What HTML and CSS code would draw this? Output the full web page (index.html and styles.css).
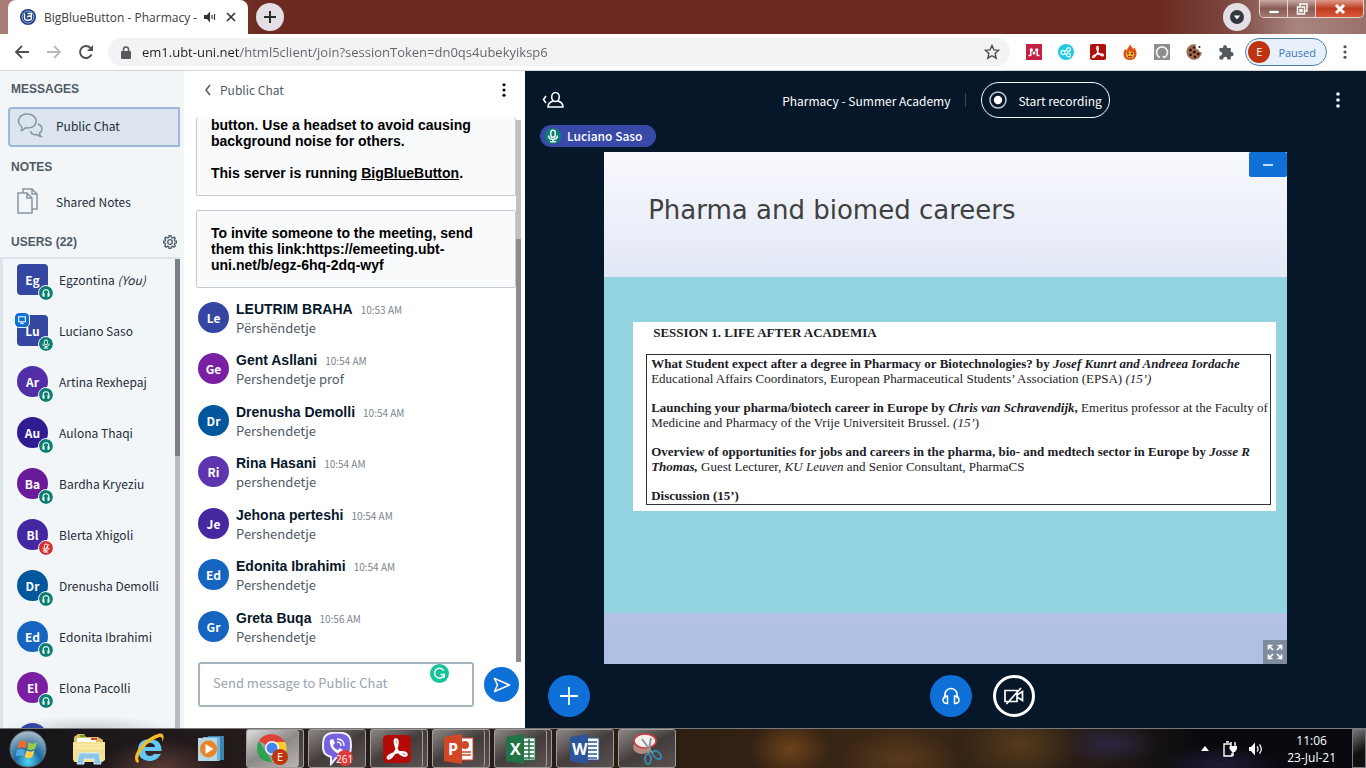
FILE: index.html
```html
<!DOCTYPE html>
<html lang="en">
<head>
    <meta charset="UTF-8">
    <meta name="viewport" content="width=device-width, initial-scale=1.0">
    <title>BigBlueButton - Pharmacy - Summer Academy</title>
    <link rel="stylesheet" href="styles.css">
</head>
<body>
    <svg class="sprite" aria-hidden="true">
        <symbol id="headset" viewBox="0 0 20 20">
            <path d="M4 12.500C3 5.500 6 2.500 10 2.500s7 3 6 10" fill="none" stroke="currentColor" stroke-width="1.600"/>
            <path d="M6.500 10v7.500C3.500 17.500 2 16 2 14s1.500-4 4.500-4zM13.500 10v7.500c3 0 4.500-1.500 4.500-3.500s-1.500-4-4.500-4z" fill="none" stroke="currentColor" stroke-width="1.500"/>
        </symbol>
        <symbol id="headset-small" viewBox="0 0 20 20">
            <path d="M4.500 12C3.500 6 6 3.500 10 3.500S16.500 6 15.500 12" fill="none" stroke="currentColor" stroke-width="2.400"/>
            <path d="M7 10v8c-3 0-4.500-1.500-4.500-4S4 10 7 10zM13 10v8c3 0 4.500-1.500 4.500-4S16 10 13 10z" fill="currentColor"/>
        </symbol>
        <symbol id="mic" viewBox="0 0 16 16">
            <rect x="5.500" y="1.500" width="5" height="8" rx="2.500" fill="none" stroke="currentColor" stroke-width="1.600"/>
            <path d="M3 7.500c0 6 10 6 10 0M8 12v2.500M4.500 14.500h7" fill="none" stroke="currentColor" stroke-width="1.600"/>
        </symbol>
        <symbol id="kebab" viewBox="0 0 4 16">
            <circle cx="2" cy="2" r="1.800"/><circle cx="2" cy="8" r="1.800"/><circle cx="2" cy="14" r="1.800"/>
        </symbol>
        <symbol id="acrobat" viewBox="0 0 16 16">
            <path d="M7 2.500c2-.5 1.500 3 .5 6C6.500 11 4 14 3 13.500 1.500 12.500 5 10.500 8 10s5.500 0 5.500 1.200c0 1.500-3.500.3-5-2C7 7 6.300 3 7 2.500z" fill="none" stroke="#fff" stroke-width="1.300"/>
        </symbol>
    </svg>

    <header class="tabstrip">
        <div class="tab">
            <svg class="favicon" viewBox="0 0 16 16"><circle cx="8" cy="8" r="8" fill="#1f3f82"/><circle cx="8" cy="8" r="6" fill="none" stroke="#8fa9da"/><path d="M4.500 4.500v4.500c0 3 7 3 7 0s-4-2-4-.5M7.500 4.500h4v3" fill="none" stroke="#fff" stroke-width="1.400"/></svg>
            <span class="tab-title">BigBlueButton - Pharmacy -</span>
            <svg class="sound" viewBox="0 0 12 12"><path d="M0 4h3l3-3.500v11L3 8H0z"/><path d="M8 4v4M10.500 3v6" stroke="#333" stroke-width="1.200"/></svg>
            <button class="plain" aria-label="Close tab"><svg width="10" height="10" viewBox="0 0 10 10"><path d="M1 1l8 8M9 1L1 9" stroke="#333" stroke-width="1.600"/></svg></button>
        </div>
        <button class="round-btn" aria-label="New tab"><svg width="14" height="14" viewBox="0 0 14 14"><path d="M7 1v12M1 7h12" stroke="#2b2b2b" stroke-width="2"/></svg></button>
        <button class="round-btn tab-search" aria-label="Search tabs"><svg width="14" height="14" viewBox="0 0 14 14"><circle cx="7" cy="7" r="7" fill="#333840"/><path d="M3.800 5.500h6.400L7 9.500z" fill="#fff"/></svg></button>
        <div class="window-controls">
            <button aria-label="Minimize"><svg width="12" height="12" viewBox="0 0 12 12"><path d="M1 7.500h10v3H1z" fill="#fff" stroke="#555" stroke-width=".5"/></svg></button>
            <button aria-label="Restore"><svg width="12" height="12" viewBox="0 0 12 12"><path d="M4 3V1h7v7H9" fill="none" stroke="#fff" stroke-width="1.500"/><path d="M1.500 4h7v7h-7zM4 6.500h2v2H4z" fill="none" stroke="#fff" stroke-width="1.500"/></svg></button>
            <button class="close" aria-label="Close"><svg width="12" height="12" viewBox="0 0 12 12"><path d="M2 2l8 8M10 2l-8 8" stroke="#fff" stroke-width="3"/></svg></button>
        </div>
    </header>

    <nav class="toolbar">
        <button class="plain" aria-label="Back"><svg width="16" height="16" viewBox="0 0 16 16"><path d="M15 8H2M8 2L2 8l6 6" fill="none" stroke="#4d5156" stroke-width="1.800"/></svg></button>
        <button class="plain" aria-label="Forward"><svg width="16" height="16" viewBox="0 0 16 16"><path d="M1 8h13M8 2l6 6-6 6" fill="none" stroke="#b7babd" stroke-width="1.800"/></svg></button>
        <button class="plain" aria-label="Reload"><svg width="16" height="16" viewBox="0 0 16 16"><path d="M13.500 10.500A6 6 0 1 1 12.500 4" fill="none" stroke="#4d5156" stroke-width="1.900"/><path d="M15 1v6H9z" fill="#4d5156"/></svg></button>
        <div class="address">
            <svg width="10" height="13" viewBox="0 0 10 13"><rect y="5" width="10" height="8" rx="1" fill="#55595e"/><path d="M2.500 6V3.500c0-3.300 5-3.300 5 0V6" fill="none" stroke="#55595e" stroke-width="1.500"/></svg>
            <input type="text" aria-label="Address" value="em1.ubt-uni.net/html5client/join?sessionToken=dn0qs4ubekyiksp6">
            <button class="plain" aria-label="Bookmark"><svg width="16" height="16" viewBox="0 0 16 16"><path d="M8 1.500l1.900 4.400 4.800.4-3.600 3.200 1.100 4.700L8 11.700l-4.200 2.500 1.100-4.700L1.300 6.300l4.800-.4z" fill="none" stroke="#4a4d51" stroke-width="1.400"/></svg></button>
        </div>
        <div class="extensions">
            <button class="plain" aria-label="Mendeley"><svg viewBox="0 0 16 16"><path d="M0 0h16v16H0z" fill="#c4213f"/><path d="M2.500 11.500h2c1 0-.5-3 .5-5M13.500 11.500h-2c-1 0 .5-3-.5-5" fill="none" stroke="#fff" stroke-width="1.500"/><circle cx="5.300" cy="6" r="1.700" fill="#fff"/><circle cx="10.700" cy="6" r="1.700" fill="#fff"/><circle cx="8" cy="9" r="1.500" fill="#fff"/></svg></button>
            <button class="plain" aria-label="Share"><svg viewBox="0 0 16 16"><circle cx="8" cy="8" r="8" fill="#1fc8e3"/><g fill="none" stroke="#e8fbff" stroke-width="1.300"><circle cx="5" cy="8.500" r="2"/><circle cx="10.500" cy="5.500" r="1.900"/><circle cx="10.500" cy="11" r="1.900"/><path d="M6.500 7.500l2-1.200M6.500 9.500l2 1"/></g></svg></button>
            <button class="plain" aria-label="Acrobat"><svg viewBox="0 0 16 16"><rect width="16" height="16" rx="2" fill="#b10e0e"/><use href="#acrobat"/></svg></button>
            <button class="plain" aria-label="Flame"><svg viewBox="0 0 16 16"><path d="M8 0c0 2 3 3 3 5l2-1.500c0 2 1.500 3 1.500 6C14.500 14 11.500 16 8 16s-6.500-2-6.500-6c0-2 .5-3 1.500-5l2 1.500C5 4 7.500 3 8 0z" fill="#df5319"/><path d="M4 9c1-2 7-2 8 0 1 7-9 7-8 0z" fill="#f9b233"/><circle cx="6" cy="9.500" r=".9" fill="#402010"/><circle cx="10" cy="9.500" r=".9" fill="#402010"/><path d="M6 12c1 1.300 3 1.300 4 0" fill="none" stroke="#402010"/></svg></button>
            <button class="plain" aria-label="Capture"><svg viewBox="0 0 16 16"><path d="M0 0h16v16H0z" fill="#8e8e8e"/><path d="M6 13.500A5.500 5.500 0 1 1 10 13.500L9 12" fill="none" stroke="#f3f3f3" stroke-width="1.700"/></svg></button>
            <button class="plain" aria-label="Cookies"><svg viewBox="0 0 16 16"><path d="M10 .5A7.700 7.700 0 1 0 15.800 8c-2 .7-3.300-.7-3-2.200C10.500 6 9 4 10 .5z" fill="#a06a50"/><g fill="#31150d"><circle cx="4.500" cy="6" r="1.500"/><circle cx="8" cy="3.500" r="1.200"/><circle cx="8.300" cy="8" r="1.600"/><circle cx="4.500" cy="10.800" r="1.400"/><circle cx="9" cy="12.800" r="1.400"/><circle cx="12.300" cy="10" r="1.400"/><circle cx="13.500" cy="3" r="1"/></g></svg></button>
            <button class="plain" aria-label="Extensions"><svg viewBox="0 0 16 16"><path d="M1.500 4h3.700C4.200.3 9.800.3 8.800 4h4v4.200c3.700-.8 3.700 4.800 0 4V15.500H9.300c.5-3.800-4.500-3.800-4 0H1.500v-3.800c3.600.4 3.600-4.600 0-4.200z" fill="#55585c"/></svg></button>
        </div>
        <button class="profile"><span>E</span>Paused</button>
        <button class="plain browser-menu" aria-label="Menu"><svg width="4" height="14"><use href="#kebab"/></svg></button>
    </nav>

    <main class="app">
        <aside class="sidebar">
            <h2>MESSAGES</h2>
            <button class="side-link active">
                <svg viewBox="0 0 26 26"><g fill="none" stroke="#8795a3" stroke-width="1.500"><path d="M4.500 18.500c.5-1.500.7-2.500.3-3.500C-2 9 3 2 10 2c12 0 12 14 1 14-1.500 0-2 0-2.500-.3-1.500 1.500-2.500 2.300-4 2.800z"/><path d="M21 12c5 2 5 7 1.500 9 0 1.500.5 2.500 1.500 3.500-2 0-3-1-4-2-3 .5-6-.5-6.500-3.500"/></g></svg>
                Public Chat
            </button>
            <h2>NOTES</h2>
            <button class="side-link">
                <svg viewBox="0 0 26 26"><g fill="none" stroke="#8795a3" stroke-width="1.500"><path d="M1 5h9l5 5v15H1zM10 5v5h5"/><path d="M6 5V1h9l5 5v15h-5M15 1v5h5"/></g></svg>
                Shared Notes
            </button>
            <div class="users-head">
                <h2>USERS (22)</h2>
                <button class="plain" aria-label="Manage users"><svg width="14" height="14" viewBox="0 0 14 14"><g fill="none" stroke="#4c5c69" stroke-width="1.300"><circle cx="7" cy="7" r="2.300"/><path d="M5.700 2.500L6 .7h2l.3 1.800 1.200.5 1.500-1L12.300 3.400l-1 1.500.5 1.100 1.600.2v1.800l-1.600.3-.5 1.100 1 1.500-1.400 1.300-1.400-.9-1.200.5-.3 1.600H6l-.3-1.600-1.200-.5-1.500.9-1.300-1.300 1-1.500L2.200 8.300.6 8V6.200L2.200 6l.5-1.100-1-1.500L3 2l1.500 1z"/></g></svg></button>
            </div>
            <div class="user-panel">
                <ul class="users">
                    <li><span class="avatar square indigo">Eg<i class="badge"><svg><use href="#headset-small"/></svg></i></span><span>Egzontina <em>(You)</em></span></li>
                    <li><span class="avatar square indigo">Lu<i class="presenter"><svg viewBox="0 0 12 12"><path d="M2 2h8v6H2zM4 10h4" fill="none" stroke="#fff" stroke-width="1.300"/></svg></i><i class="badge"><svg><use href="#mic"/></svg></i></span>Luciano Saso</li>
                    <li><span class="avatar violet">Ar<i class="badge"><svg><use href="#headset-small"/></svg></i></span>Artina Rexhepaj</li>
                    <li><span class="avatar navy">Au<i class="badge"><svg><use href="#headset-small"/></svg></i></span>Aulona Thaqi</li>
                    <li><span class="avatar plum">Ba<i class="badge"><svg><use href="#headset-small"/></svg></i></span>Bardha Kryeziu</li>
                    <li><span class="avatar grape">Bl<i class="badge muted"><svg viewBox="0 0 16 16"><use href="#mic"/><path d="M13 2L3 14" stroke="#fff" stroke-width="1.500"/></svg></i></span>Blerta Xhigoli</li>
                    <li><span class="avatar ocean">Dr<i class="badge"><svg><use href="#headset-small"/></svg></i></span>Drenusha Demolli</li>
                    <li><span class="avatar blue">Ed<i class="badge"><svg><use href="#headset-small"/></svg></i></span>Edonita Ibrahimi</li>
                    <li><span class="avatar purple">El<i class="badge"><svg><use href="#headset-small"/></svg></i></span>Elona Pacolli</li>
                    <li><span class="avatar indigo"></span></li>
                </ul>
                <div class="scrollbar"><div class="thumb"></div></div>
            </div>
        </aside>

        <section class="chat">
            <header class="chat-head">
                <button class="plain"><svg width="6" height="12" viewBox="0 0 6 12"><path d="M5 1L1 6l4 5" fill="none" stroke="#4e5a66" stroke-width="1.500"/></svg>Public Chat</button>
                <button class="plain" aria-label="Chat options"><svg width="4" height="14"><use href="#kebab"/></svg></button>
            </header>
            <div class="chat-body">
                <div class="messages">
                    <div class="notice first">button. Use a headset to avoid causing background noise for others.<br><br>This server is running <a href="#">BigBlueButton</a>.</div>
                    <div class="notice">To invite someone to the meeting, send them this link:https://emeeting.ubt-uni.net/b/egz-6hq-2dq-wyf</div>
                    <ul class="posts">
                        <li><span class="avatar indigo">Le</span><div><b>LEUTRIM BRAHA</b><time>10:53 AM</time><p>Përshëndetje</p></div></li>
                        <li><span class="avatar purple">Ge</span><div><b>Gent Asllani</b><time>10:54 AM</time><p>Pershendetje prof</p></div></li>
                        <li><span class="avatar ocean">Dr</span><div><b>Drenusha Demolli</b><time>10:54 AM</time><p>Pershendetje</p></div></li>
                        <li><span class="avatar lilac">Ri</span><div><b>Rina Hasani</b><time>10:54 AM</time><p>pershendetje</p></div></li>
                        <li><span class="avatar grape">Je</span><div><b>Jehona perteshi</b><time>10:54 AM</time><p>Pershendetje</p></div></li>
                        <li><span class="avatar blue">Ed</span><div><b>Edonita Ibrahimi</b><time>10:54 AM</time><p>Pershendetje</p></div></li>
                        <li><span class="avatar blue">Gr</span><div><b>Greta Buqa</b><time>10:56 AM</time><p>Pershendetje</p></div></li>
                    </ul>
                </div>
                <div class="scrollbar"><div class="thumb"></div></div>
            </div>
            <form class="composer">
                <div class="field">
                    <textarea rows="1" aria-label="Message" placeholder="Send message to Public Chat"></textarea>
                    <svg class="grammarly" viewBox="0 0 20 20"><circle cx="10" cy="10" r="10" fill="#15c39a"/><path d="M14.500 7A5.200 5.200 0 1 0 15 11h-4M15 11v3.500" fill="none" stroke="#fff" stroke-width="1.600"/></svg>
                </div>
                <button type="button" class="send" aria-label="Send"><svg width="18" height="16" viewBox="0 0 18 16"><path d="M1.500 1.500L16.500 8l-15 6.500L4.500 8z" fill="none" stroke="#fff" stroke-width="1.500" stroke-linejoin="round"/></svg></button>
            </form>
        </section>

        <section class="stage">
            <header class="stage-head">
                <button class="plain" aria-label="Toggle user list"><svg width="22" height="18" viewBox="0 0 22 18"><g fill="none" stroke="#fff" stroke-width="1.600"><path d="M4 5L1.500 8.500 4 12"/><ellipse cx="13.500" cy="6" rx="3.800" ry="4.500"/><path d="M11 10c-3 1-5 3-5 6h15c0-3-2-5-5-6"/></g></svg></button>
                <div class="meeting">
                    <h1>Pharmacy - Summer Academy</h1>
                    <span class="divider"></span>
                    <button class="record"><svg width="18" height="18" viewBox="0 0 18 18"><circle cx="9" cy="9" r="8" fill="none" stroke="#c8cdd3" stroke-width="1.500"/><circle cx="9" cy="9" r="4.200" fill="#fff"/></svg>Start recording</button>
                </div>
                <button class="plain options" aria-label="Options"><svg width="4" height="16" fill="#fff"><use href="#kebab"/></svg></button>
            </header>
            <div class="talking"><button><svg width="16" height="16"><use href="#mic"/></svg>Luciano Saso</button></div>
            <div class="presentation">
                <article class="slide">
                    <h2>Pharma and biomed careers</h2>
                    <div class="teal">
                        <div class="agenda">
                            <h3>SESSION 1. LIFE AFTER ACADEMIA</h3>
                            <div class="agenda-box">
                                <p><b>What Student expect after a degree in Pharmacy or Biotechnologies? by <em>Josef Kunrt and Andreea Iordache</em></b><br>Educational Affairs Coordinators, European Pharmaceutical Students’ Association (EPSA) <em>(15’)</em></p>
                                <p><b>Launching your pharma/biotech career in Europe by <em>Chris van Schravendijk</em>,</b> Emeritus professor at the Faculty of<br>Medicine and Pharmacy of the Vrije Universiteit Brussel. <em>(15’</em>)</p>
                                <p><b>Overview of opportunities for jobs and careers in the pharma, bio- and medtech sector in Europe by <em>Josse R<br>Thomas,</em></b> Guest Lecturer, <em>KU Leuven</em> and Senior Consultant, PharmaCS</p>
                                <p><b>Discussion (15’)</b></p>
                            </div>
                        </div>
                    </div>
                    <button class="hide-slide" aria-label="Minimize presentation"><svg width="10" height="2"><path d="M0 1h10" stroke="#fff" stroke-width="1.500"/></svg></button>
                    <button class="fullscreen" aria-label="Fullscreen"><svg width="16" height="16" viewBox="0 0 16 16"><path d="M6 6L2 2M10 6l4-4M6 10l-4 4M10 10l4 4M1.500 5.500v-4h4M10.500 1.500h4v4M1.500 10.500v4h4M10.500 14.500h4v-4" fill="none" stroke="#fff" stroke-width="1.700"/></svg></button>
                </article>
            </div>
            <footer class="actions">
                <button class="action" aria-label="Actions"><svg width="20" height="20" viewBox="0 0 20 20"><path d="M10 1v18M1 10h18" stroke="#fff" stroke-width="1.800"/></svg></button>
                <div class="media">
                    <button class="action" aria-label="Leave audio"><svg width="22" height="20"><use href="#headset"/></svg></button>
                    <button class="action camera" aria-label="Share webcam"><svg width="22" height="18" viewBox="0 0 22 18"><path d="M2 3.500h12v11H2zM14 8l5.500-3.500v9L14 10M3.500 17L18 1" fill="none" stroke="#fff" stroke-width="1.700"/></svg></button>
                </div>
            </footer>
        </section>
    </main>

    <footer class="taskbar">
        <div class="pinned">
            <button class="plain" aria-label="Start"><svg width="38" height="38" viewBox="0 0 38 38">
                <defs><radialGradient id="orb" cx=".5" cy=".85" r=".8"><stop offset="0" stop-color="#52d5f4"/><stop offset=".45" stop-color="#1a6ba0"/><stop offset="1" stop-color="#a4b9c3"/></radialGradient></defs>
                <circle cx="19" cy="19" r="18" fill="url(#orb)" stroke="#57717f"/>
                <path d="M10 12c3-2 5-2 8 0l-1.500 6.500c-3-1.500-5-1.500-8 0z" fill="#ee6a35"/><path d="M19.500 12.500c3 1.500 5 1.500 8.500 0L26 19c-3 1.500-5 1.500-8 0z" fill="#9bc94b"/><path d="M8 20c3-1.500 5-1.500 8 0l-1.500 6.500c-3-1.500-5-1.500-8 0z" fill="#52a8e5"/><path d="M17.500 20.500c3 1.500 5 1.500 8 0l-2 6.500c-3 1.500-5 1.500-8 0z" fill="#fccd45"/></svg></button>
            <button class="plain" aria-label="Explorer"><svg width="34" height="32" viewBox="0 0 34 32"><path d="M2 4l4-3h6l2 3h12l5 3v22H2z" fill="#d9bd67"/><path d="M5 5h19v6H5z" fill="#fff"/><path d="M8 2h5v2H8z" fill="#5f9e38"/><path d="M19 5h6v2h-6z" fill="#d34535"/><path d="M1 9h32v18l-3 2H3l-2-2z" fill="#f4e192"/><path d="M3 12h28M3 15h28" stroke="#fff3bd"/><path d="M5 31l2-11h20l2 11h-7v-5H12v5z" fill="#8bc6e8" stroke="#d5effb"/></svg></button>
            <button class="plain" aria-label="Internet Explorer"><svg width="34" height="34" viewBox="0 0 34 34"><path d="M28 22c-3 5-7 7-11 7C9 29 5 24 5 17.500S10 7 17 7c8 0 12 5 11.500 12H12c.5 3 2 5 5 5 2 0 3-1 4-2zM12 15h10c0-2-2-4-5-4s-5 2-5 4z" fill="#63c8f2" fill-rule="evenodd"/><path d="M5 31c-9-4 4-24 20-29 6-2 7 3 4 8 1-5-1-6-5-4C13 10 2 25 6 29z" fill="#f2bd29"/></svg></button>
            <button class="plain" aria-label="Media Player"><svg width="28" height="28" viewBox="0 0 28 28"><path d="M11 1h16v24H11z" fill="#3d84b2"/><path d="M6 2h17v24H6z" fill="#72b5d6"/><path d="M1 3h19v23H1z" fill="#b8d7e5"/><circle cx="11.500" cy="14" r="8.500" fill="#e98325"/><path d="M8.500 9v10l8-5z" fill="#fff"/></svg></button>
        </div>
        <div class="running">
            <button class="task stacked bright" aria-label="Chrome"><span><svg width="32" height="32" viewBox="0 0 32 32"><path d="M15 15L2 8C7-1 22-1 28 9H15z" fill="#dc4238"/><path d="M2 8l8 13 5 8C2 30-3 17 2 8z" fill="#2ba24c"/><path d="M19 9h9c5 11-3 20-13 20l7-11z" fill="#fbc931"/><circle cx="15" cy="15" r="7" fill="#fff"/><circle cx="15" cy="15" r="5.500" fill="#4386ef"/><circle cx="23" cy="24" r="8" fill="#be3610"/><text x="20" y="28" font-size="11" fill="#fff">E</text></svg></span></button>
            <button class="task" aria-label="Viber"><svg width="34" height="34" viewBox="0 0 34 34"><path d="M8 2c5-2 13-2 18 0 4 2 5 5 5 12s-2 10-6 11l-9 1-5 6v-7C5 23 3 21 3 14S4 4 8 2z" fill="#7562df" stroke="#f1efff" stroke-width="2"/><path d="M10 8l3-1 2 4-2 2c1 3 2 4 5 5l2-2 4 3c-1 4-4 4-7 2-5-3-8-8-7-13z" fill="#fff"/><path d="M17 7c5 0 7 3 7 7M17 10c3 0 4 2 4 4" fill="none" stroke="#fff" stroke-width="1.300"/><circle cx="25" cy="26" r="8" fill="#df3837"/><text x="16" y="31" font-size="10" fill="#fff">261</text></svg></button>
            <button class="task stacked" aria-label="Acrobat"><span><svg width="28" height="28" viewBox="0 0 16 16"><rect width="16" height="16" rx="2.500" fill="#b30b08"/><use href="#acrobat"/></svg></span></button>
            <button class="task stacked" aria-label="PowerPoint"><span><svg width="30" height="30" viewBox="0 0 30 30"><path d="M16 4h13v22H16z" fill="#fff" stroke="#d24726"/><circle cx="21" cy="11" r="4" fill="#d24726"/><path d="M18 18h9M18 21h9" stroke="#d24726" stroke-width="1.500"/><path d="M0 3l18-3v30L0 27z" fill="#d24726"/><text class="office" x="4" y="21">P</text></svg></span></button>
            <button class="task stacked" aria-label="Excel"><span><svg width="30" height="30" viewBox="0 0 30 30"><path d="M16 4h13v22H16z" fill="#fff" stroke="#217346"/><path d="M18 8h10M18 12h10M18 16h10M18 20h10M18 24h10M23 5v20" stroke="#217346" stroke-width="1.500"/><path d="M0 3l18-3v30L0 27z" fill="#217346"/><text class="office" x="4" y="21">X</text></svg></span></button>
            <button class="task" aria-label="Word"><svg width="30" height="30" viewBox="0 0 30 30"><path d="M16 4h13v22H16z" fill="#fff" stroke="#2b579a"/><path d="M18 8h9M18 12h9M18 16h9M18 20h9M18 24h9" stroke="#2b579a" stroke-width="1.500"/><path d="M0 3l18-3v30L0 27z" fill="#2b579a"/><text class="office" x="2" y="21">W</text></svg></button>
            <button class="task" aria-label="Snipping Tool"><svg width="32" height="32" viewBox="0 0 32 32"><ellipse cx="11" cy="14" rx="9" ry="7" fill="#b58a7b"/><ellipse cx="14" cy="8" rx="11" ry="7" fill="#f7eeee" stroke="#d13b40" stroke-width="1.500"/><path d="M11 6l11 15M20 5l-3 17" stroke="#8a97a0" stroke-width="2"/><ellipse cx="17" cy="26" rx="3" ry="5" fill="none" stroke="#3a88ad" stroke-width="2"/><ellipse cx="26" cy="22" rx="3" ry="5" fill="none" stroke="#3a88ad" stroke-width="2" transform="rotate(-45 26 22)"/></svg></button>
        </div>
        <div class="tray">
            <button class="plain" aria-label="Hidden icons"><svg width="8" height="5" viewBox="0 0 8 5"><path d="M0 5l4-5 4 5z" fill="#fff"/></svg></button>
            <button class="plain" aria-label="Power"><svg width="14" height="16" viewBox="0 0 14 16"><path d="M8 3H1v12h8v-3M3 1h3" fill="none" stroke="#fff" stroke-width="1.400"/><path d="M8 1v4M12 1v4M10 10v5" stroke="#fff" stroke-width="1.400"/><path d="M6.500 5H14v3l-2 3H9L6.500 8z" fill="#fff"/></svg></button>
            <button class="plain" aria-label="Volume"><svg width="14" height="14" viewBox="0 0 14 14"><path d="M0 5h2l4-4.500v13L2 9H0z" fill="#fff"/><path d="M8 4.500c1.300 1.500 1.300 3.500 0 5M10.500 2.500c2.500 3 2.500 6 0 9" fill="none" stroke="#fff" stroke-width="1.200"/></svg></button>
            <div class="clock"><time>11:06</time><time>23-Jul-21</time></div>
            <button class="show-desktop" aria-label="Show desktop"></button>
        </div>
    </footer>
</body>
</html>
```

FILE: styles.css
```css
* {
    box-sizing: border-box;
}

body {
    margin: 0;
    height: 100vh;
    display: flex;
    flex-direction: column;
    overflow: hidden;
    font-family: "Noto Sans CJK SC", "Open Sans", sans-serif;
    font-size: 12px;
    color: #1e2d3b;
}

h1, h2, h3, p, ul {
    margin: 0;
    padding: 0;
}

ul {
    list-style: none;
}

button, input, textarea {
    font: inherit;
    color: inherit;
}

button {
    display: flex;
    align-items: center;
    justify-content: center;
    padding: 0;
    border: none;
    cursor: pointer;
}

svg {
    flex: none;
}

.plain {
    background: none;
}

.sprite {
    display: none;
}

/* browser */
.tabstrip {
    height: 34px;
    display: flex;
    padding-left: 8px;
    background: linear-gradient(90deg, #a97e78 0, #6c2b20 260px, #6a2a1f 85%, #7c4840 90%, #a98580 95%, #9a716a);
    font-family: "Open Sans", sans-serif;
}

.tab {
    width: 240px;
    display: flex;
    align-items: center;
    padding: 0 12px;
    background: #fff;
    border-radius: 8px 8px 0 0;
    color: #3c4043;
}

.favicon {
    width: 16px;
    height: 16px;
    margin-right: 8px;
}

.tab-title {
    flex: 1;
    white-space: nowrap;
}

.sound {
    width: 12px;
    height: 12px;
    margin-right: 10px;
    fill: #333;
}

.round-btn {
    width: 28px;
    height: 28px;
    margin: 3px 8px;
    border-radius: 50%;
    background: #e3dfe4;
}

.tab-search {
    margin-left: auto;
}

.window-controls {
    display: flex;
    height: 18px;
    margin-right: 2px;
    border: 1px solid #e6d3d0;
    border-top: none;
    border-radius: 0 0 5px 5px;
    overflow: hidden;
}

.window-controls button {
    width: 28px;
    background: linear-gradient(#c9aaa5, #8a5a53 50%, #a07972);
    border-right: 1px solid #e6d3d0;
}

.window-controls .close {
    width: 47px;
    border: none;
    background: linear-gradient(#dd9a8a, #c03c20 50%, #d8583a);
}

.toolbar {
    height: 37px;
    display: flex;
    align-items: center;
    gap: 16px;
    padding: 0 19px 0 14px;
    background: #fff;
    border-bottom: 1px solid #d4d7da;
    font-family: "Open Sans", sans-serif;
    font-size: 13px;
}

.address {
    flex: 1;
    height: 28px;
    display: flex;
    align-items: center;
    gap: 11px;
    margin-left: -2px;
    padding: 0 10px 0 13px;
    border-radius: 14px;
    background: #f1f3f4;
}

/* host is dark, path is grey */
.address input {
    flex: 1;
    padding: 0;
    border: none;
    outline: none;
    color: transparent;
    background: linear-gradient(90deg, #202124 98px, #5f6368 98px);
    background-clip: text;
}

.extensions {
    display: flex;
    gap: 16px;
    margin-right: -5px;
}

.extensions svg {
    width: 16px;
    height: 16px;
}

.profile {
    height: 28px;
    gap: 8px;
    padding: 0 10px 0 2px;
    border: 1px solid #4a7dac;
    border-radius: 14px;
    background: #e8f1fb;
    color: #3b76b6;
    font-size: 11px;
}

.profile span {
    width: 22px;
    line-height: 22px;
    border-radius: 50%;
    background: #be3410;
    color: #fff;
}

.browser-menu {
    fill: #4d5156;
}

/* application */
.app {
    flex: 1;
    min-height: 0;
    display: grid;
    grid-template-columns: 184px 341px 1fr;
    grid-template-rows: 100%;
}

.sidebar {
    display: flex;
    flex-direction: column;
    padding-top: 8px;
    background: #f3f6f9;
    overflow: hidden;
}

.sidebar h2 {
    padding-left: 11px;
    font: bold 12px/20px "Liberation Sans", sans-serif;
    color: #4e5a66;
}

.side-link {
    height: 40px;
    flex: none;
    justify-content: flex-start;
    gap: 13px;
    margin: 8px 4px 10px 8px;
    padding: 0 0 4px 7px;
    background: none;
    border: 2px solid transparent;
    border-radius: 4px 0 0 4px;
}

.side-link svg {
    width: 26px;
    height: 26px;
}

.side-link.active {
    background: #dce4ed;
    border-color: #9db8d8;
}

.side-link:not(.active) {
    margin: 6px 4px 9px 8px;
}

.users-head {
    display: flex;
    justify-content: space-between;
    padding-right: 7px;
}

.user-panel {
    flex: 1;
    min-height: 0;
    display: flex;
    margin: 5px 4px 0 0;
    border-top: 2px solid #dce4ed;
    border-left: 3px solid #dce4ed;
}

.users {
    flex: 1;
    overflow: hidden;
    background: radial-gradient(50% 12px at 50% 100%, #ccd1d6, transparent);
}

.users li {
    height: 51px;
    display: flex;
    gap: 11px;
    padding: 5px 0 0 14px;
    line-height: 31px;
}

.avatar {
    position: relative;
    flex: none;
    width: 31px;
    height: 31px;
    line-height: 31px;
    border-radius: 50%;
    color: #fff;
    font-weight: bold;
    text-align: center;
}

.square { border-radius: 4px; }
.indigo { background: #3545a2; }
.violet { background: #512da8; }
.navy { background: #311b92; }
.plum { background: #6a1b9a; }
.grape { background: #4527a0; }
.ocean { background: #01579b; }
.blue { background: #1565c0; }
.purple { background: #7b1fa2; }
.lilac { background: #5e35b1; }

.badge, .presenter {
    position: absolute;
    display: flex;
    align-items: center;
    justify-content: center;
    width: 14px;
    height: 14px;
    border-radius: 50%;
    background: #0b8071;
    outline: 1px solid #f3f6f9;
}

.badge {
    right: -5px;
    bottom: -5px;
}

.badge svg, .presenter svg {
    width: 10px;
    height: 10px;
}

.badge.muted {
    background: #d32f2f;
}

.presenter {
    top: -2px;
    left: -2px;
    border-radius: 4px;
    background: #0f70d7;
}

.scrollbar {
    width: 5px;
    background: #b8bcc0;
}

.thumb {
    height: 42%;
    background: #7c8084;
}

/* chat */
.chat {
    display: flex;
    flex-direction: column;
    padding-left: 12px;
    background: #fff;
}

.chat-head {
    height: 46px;
    display: flex;
    justify-content: space-between;
    padding: 0 19px 9px 9px;
    color: #4e5a66;
}

.chat-head button {
    gap: 9px;
}

.chat-body {
    flex: 1;
    min-height: 0;
    display: flex;
    margin-right: 4px;
}

.messages {
    flex: 1;
    display: flex;
    flex-direction: column;
    overflow: hidden;
}

.notice {
    padding: 14px;
    margin-bottom: 5px;
    border: 1px solid #c5cbd2;
    border-radius: 2px;
    background: #f9fafc;
    color: #000;
    font: bold 14px/16px "Liberation Sans", sans-serif;
}

.notice.first {
    margin-bottom: 14px;
    padding-top: 0;
    border-top: none;
}

.notice a {
    color: inherit;
}

.posts {
    flex: 1;
    display: grid;
    grid-auto-rows: 1fr;
    padding-bottom: 9px;
}

.posts li {
    display: flex;
    gap: 7px;
    padding-left: 2px;
}

.posts .avatar {
    margin-top: 9px;
}

.posts b {
    color: #06172a;
    font: bold 14px/20px "Liberation Sans", sans-serif;
}

.posts li > div {
    padding-top: 6px;
    line-height: 20px;
}

.posts time {
    margin-left: 8px;
    color: #7b858f;
    font-size: 10px;
}

.posts p {
    color: #4e5a66;
    font-size: 13px;
    line-height: 16px;
}

.chat-body .scrollbar {
    display: flex;
    align-items: flex-end;
    margin-top: 3px;
    background: #c1c1c1;
}

.chat-body .thumb {
    width: 100%;
    height: 78%;
    background: #8c8c8c;
}

.composer {
    display: flex;
    align-items: center;
    gap: 10px;
    padding: 0 6px 21px 2px;
}

.field {
    position: relative;
    flex: 1;
    display: flex;
}

.field textarea {
    flex: 1;
    height: 45px;
    padding: 9px 13px;
    resize: none;
    border: 2px solid #a7b3bd;
    border-radius: 3px;
    outline: none;
    font-size: 13px;
    line-height: 20px;
    overflow: hidden;
}

.field textarea::placeholder {
    color: #9aa3ad;
}

.grammarly {
    position: absolute;
    top: 2px;
    right: 25px;
    width: 19px;
    height: 19px;
}

.send {
    width: 35px;
    height: 35px;
    border-radius: 50%;
    background: #0f70d7;
}

/* meeting */
.stage {
    display: flex;
    flex-direction: column;
    background: #06172a;
    color: #fff;
}

.stage-head {
    height: 54px;
    display: grid;
    grid-template-columns: 1fr auto 1fr;
    align-items: center;
    padding: 4px 16px 0 17px;
}

.stage-head > button {
    justify-self: start;
}

.stage-head > .options {
    justify-self: end;
    padding: 0 10px;
}

.meeting {
    display: flex;
    align-items: center;
    gap: 15px;
}

.meeting h1 {
    font-size: 12px;
    font-weight: normal;
}

.divider {
    width: 1px;
    height: 14px;
    background: #3a4857;
}

.record {
    height: 36px;
    gap: 11px;
    padding: 0 7px;
    border: 1px solid #fff;
    border-radius: 18px;
    background: none;
}

.talking {
    padding: 0 15px 5px;
}

.talking button {
    height: 22px;
    gap: 6px;
    padding: 0 14px 1px 5px;
    border-radius: 11px;
    background: #3949a8;
    font-weight: 500;
}

.talking svg {
    padding: 1px;
    border-radius: 50%;
    background: #0b8071;
}

.presentation {
    flex: 1;
    min-height: 0;
    display: flex;
    justify-content: center;
}

.slide {
    position: relative;
    height: 100%;
    min-width: 0;
    aspect-ratio: 4 / 3;
    display: grid;
    grid-template-columns: minmax(0, 1fr);
    grid-template-rows: 125fr 336fr 51fr;
    background: linear-gradient(#f8f9fd, #e2e8f6 24%, #b7c4e6 85%, #adbfe3);
}

.slide h2 {
    padding: 42px 44px 0;
    color: #404040;
    font: 26px/32px "DejaVu Sans", sans-serif;
}

.teal {
    padding: 45px 11px 0 29px;
    background: #93d2df;
}

.agenda {
    padding: 2px 5px 6px 13px;
    background: #fff;
    color: #1c1c28;
    font: 13px/15px "Liberation Serif", serif;
    white-space: nowrap;
}

.agenda h3 {
    padding: 0 7px;
    margin-bottom: 12px;
    font-size: 13px;
    line-height: 18px;
}

.agenda-box {
    padding: 1px 4px;
    border: 1px solid #333;
}

.agenda p + p {
    margin-top: 14px;
}

.hide-slide, .fullscreen {
    position: absolute;
    right: 0;
}

.hide-slide {
    top: 0;
    width: 38px;
    height: 25px;
    border-radius: 2px;
    background: #0f70d7;
}

.fullscreen {
    bottom: 0;
    width: 24px;
    height: 24px;
    background: #7e8a9e;
}

.actions {
    height: 64px;
    display: grid;
    grid-template-columns: 1fr auto 1fr;
    align-items: center;
    padding: 0 23px;
}

.media {
    display: flex;
    gap: 21px;
    padding-left: 74px;
}

.action {
    width: 42px;
    height: 42px;
    border-radius: 50%;
    background: #0f70d7;
}

.action.camera {
    border: 3px solid #fff;
    background: none;
}

/* taskbar */
.taskbar {
    height: 40px;
    display: flex;
    border-top: 1px solid #77787c;
    background:
        radial-gradient(ellipse 60px 30px at 160px 40px, #5b3b35, transparent),
        radial-gradient(ellipse 40px 30px at 790px 20px, #6c421a, transparent),
        radial-gradient(ellipse 60px 30px at 900px 30px, #593a1d, transparent),
        radial-gradient(ellipse 60px 40px at 1020px 15px, #563b1b, transparent),
        radial-gradient(ellipse 50px 20px at 1110px 15px, #2c2542, transparent),
        radial-gradient(ellipse 60px 20px at 1220px 36px, #201b38, transparent),
        linear-gradient(90deg, #16151a, #251b1b 250px, #2b1d12 650px, #3c2814 900px, #251b16 1100px, #090a0f 1200px);
    color: #fff;
    font-family: "Open Sans", sans-serif;
}

.pinned {
    display: flex;
    padding-right: 2px;
}

.pinned button {
    width: 61px;
    padding-right: 5px;
}

.running {
    display: flex;
    gap: 4px;
}

.task, .task span {
    border: 1px solid #a19c9a;
    border-radius: 3px;
    background: linear-gradient(150deg, #8d8886, #423c3b 50%, #5a5250);
}

.task {
    width: 58px;
}

.task.stacked {
    justify-content: flex-start;
    padding-right: 2px;
    border-left: none;
}

.task span {
    width: 53px;
    height: 100%;
    display: flex;
    align-items: center;
    justify-content: center;
    border-width: 0 1px;
}

.task.bright span {
    background: linear-gradient(150deg, #dedede, #8c8987 50%, #b9b5b3);
}

.office {
    fill: #fff;
    font: bold 16px "Open Sans", sans-serif;
}

.tray {
    display: flex;
    align-items: center;
    gap: 12px;
    margin-left: auto;
}

.tray .plain:first-child {
    margin-right: 2px;
}

.clock {
    display: flex;
    flex-direction: column;
    align-items: center;
    margin: 0 4px 0 12px;
    line-height: 17px;
}

.show-desktop {
    align-self: stretch;
    width: 14px;
    border: 1px solid #77797e;
    background: linear-gradient(150deg, #777, #111 60%);
}
```
